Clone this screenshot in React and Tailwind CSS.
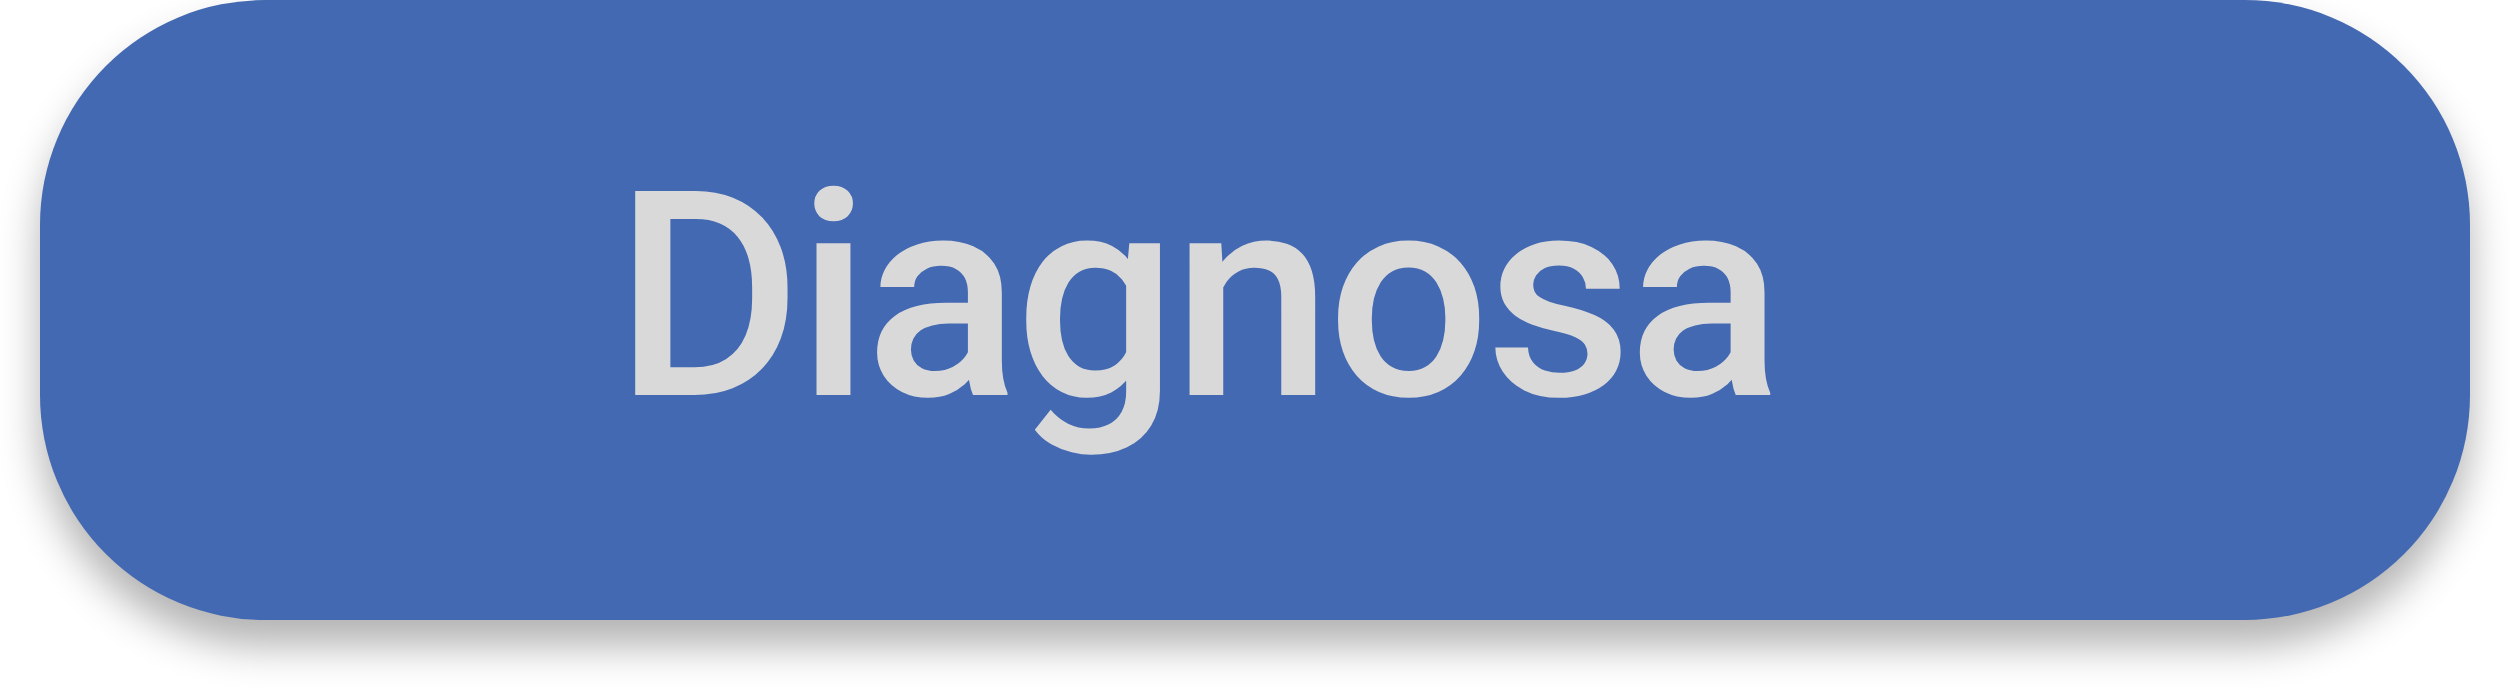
import React from 'react';

const App = () => {
  return (
    <div className="w-[2510px] h-[700px] bg-white pl-[40px] pr-[40px] overflow-hidden">
      {/* Button */}
      <div className="h-[620px] w-full rounded-[225px] bg-[#4369b2] shadow-[0_26px_40px_rgba(0,0,0,0.3)] flex items-center justify-center pb-[26px] pr-[118px]">
        <span
          className="text-[287px] leading-none font-medium tracking-[-5px] text-[#d9d9d9] whitespace-nowrap"
          style={{ fontFamily: 'Roboto, "Noto Sans", sans-serif' }}
        >
          Diagnosa
        </span>
      </div>
    </div>
  );
};

export default App;
